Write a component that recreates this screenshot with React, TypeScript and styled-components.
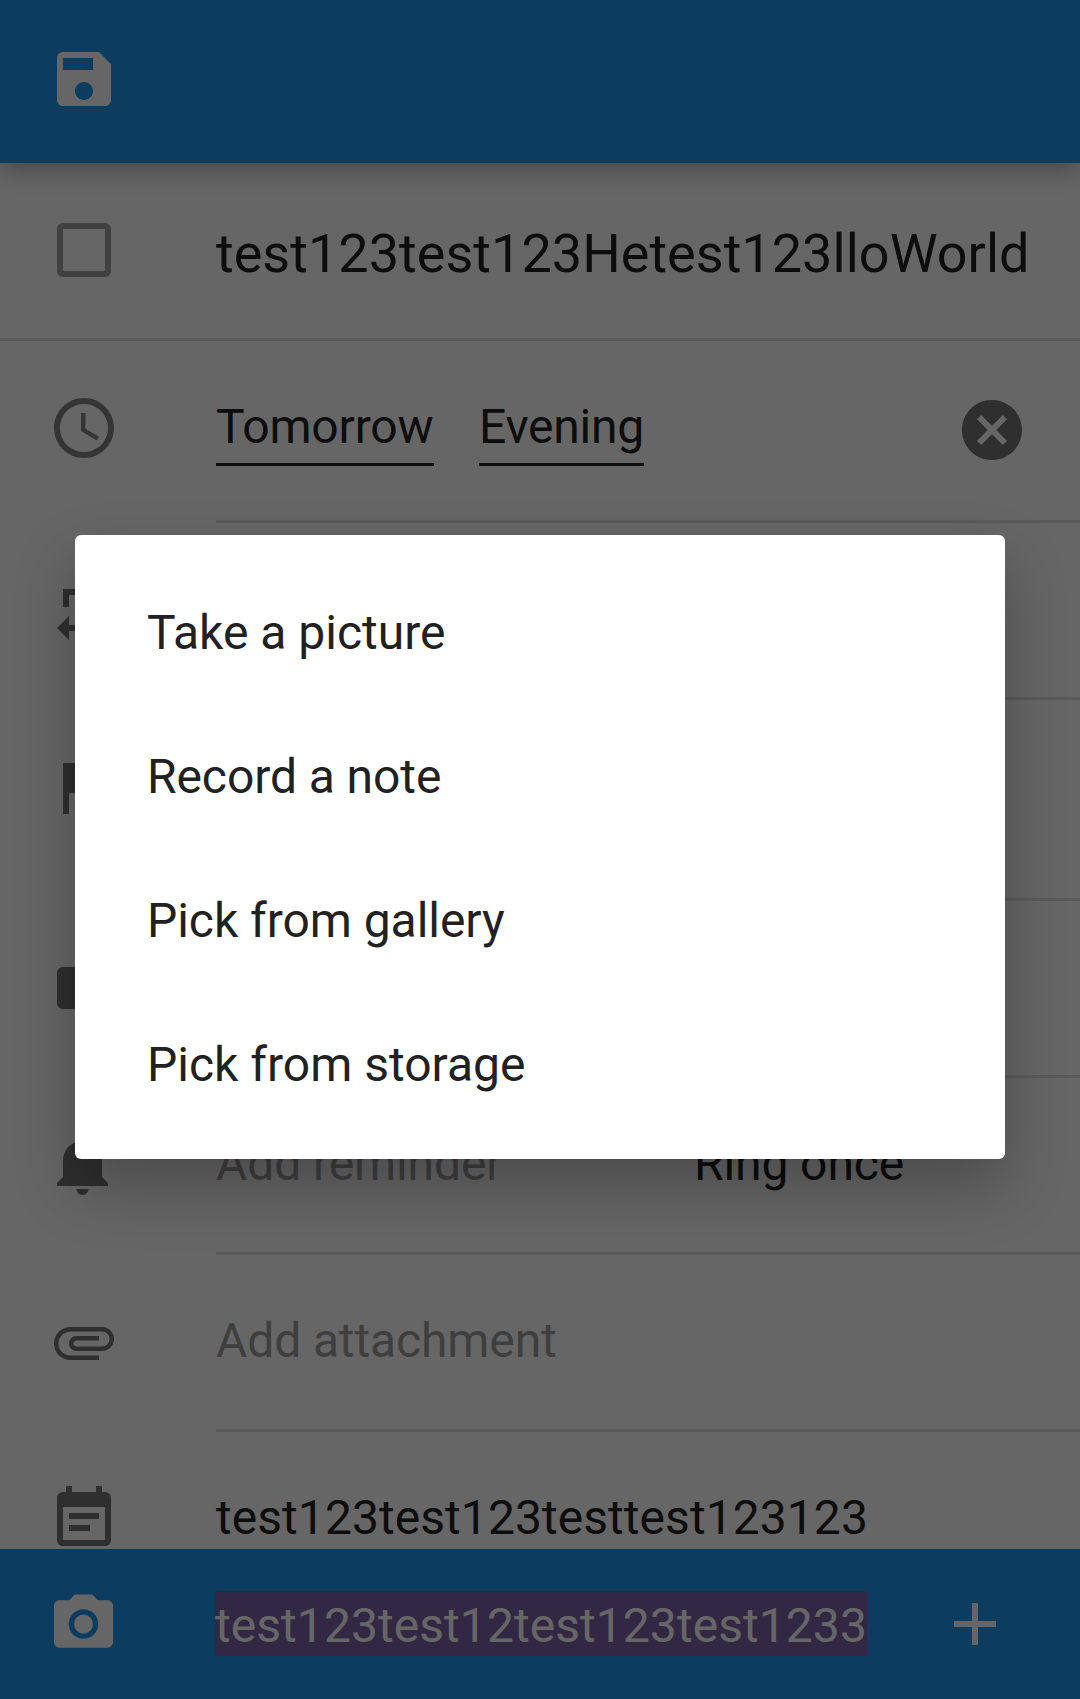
import React from "react";
import styled, { createGlobalStyle } from "styled-components";

const GlobalStyle = createGlobalStyle`
  body { margin: 0; }
  * { box-sizing: border-box; }
`;

const Screen = styled.div`
  position: relative;
  display: flex;
  flex-direction: column;
  width: 1080px;
  height: 1699px;
  overflow: hidden;
  background: #fff;
  color: #212121;
  font-family: Roboto, "Noto Sans", sans-serif;
  font-size: 48px;
  white-space: nowrap;
`;

const Toolbar = styled.header`
  position: relative;
  z-index: 1;
  flex: none;
  height: 163px;
  padding: 43px 48px 0;
  background: #2196f3;
  box-shadow: 0 9px 22px rgba(0, 0, 0, 0.27);
`;

const Icon = styled.svg<{ $color?: string }>`
  display: block;
  flex: none;
  width: 72px;
  height: 72px;
  fill: ${(p) => p.$color ?? "#757575"};
`;

const Fields = styled.main`
  flex: 1;
  min-height: 0;
  overflow: hidden;
`;

const Row = styled.section<{ $height: number; $full?: boolean }>`
  display: grid;
  grid-template-columns: 168px 1fr;
  height: ${(p) => p.$height}px;
  padding-left: 48px;
  ${(p) => p.$full && "box-shadow: inset 0 -3px #e0e0e0;"}
  > svg {
    margin-top: 51px;
  }
`;

const Content = styled.div<{ $line?: boolean }>`
  display: flex;
  align-items: flex-start;
  padding-top: 50px;
  border-bottom: ${(p) => (p.$line ? "3px solid #e0e0e0" : "none")};
`;

const Title = styled.div`
  padding-top: 5px;
  font-size: 54px;
  line-height: 72px;
  letter-spacing: 0.03px;
`;

const Value = styled.div<{ $hint?: boolean; $width?: number; $tracking?: number }>`
  width: ${(p) => (p.$width ? `${p.$width}px` : "auto")};
  line-height: 72px;
  letter-spacing: ${(p) => p.$tracking ?? 0}px;
  color: ${(p) => (p.$hint ? "#9e9e9e" : "inherit")};
`;

const Picker = styled.div<{ $width: number; $tracking: number }>`
  width: ${(p) => p.$width}px;
  height: 75px;
  margin-right: 45px;
  line-height: 72px;
  letter-spacing: ${(p) => p.$tracking}px;
  border-bottom: 3px solid #212121;
`;

const ClearButton = styled.div`
  margin: 3px 52px 0 auto;
`;

const QuickBar = styled.footer`
  display: flex;
  align-items: center;
  flex: none;
  height: 150px;
  padding: 0 69px 0 48px;
  background: #2196f3;
`;

const QuickInput = styled.div`
  flex: 1;
  padding-left: 95px;
`;

const Selection = styled.span`
  display: block;
  width: 652px;
  height: 65px;
  margin-bottom: 1px;
  line-height: 70px;
  letter-spacing: 0.06px;
  color: #fff;
  background: #7f64ab;
`;

const Scrim = styled.div`
  position: absolute;
  inset: 0;
  z-index: 2;
  display: flex;
  align-items: center;
  justify-content: center;
  padding-bottom: 5px;
  background: rgba(0, 0, 0, 0.6);
`;

const Dialog = styled.div`
  width: 930px;
  padding: 24px 0;
  border-radius: 6px;
  background: #fff;
  box-shadow: 0 28px 60px rgba(0, 0, 0, 0.26);
`;

const Option = styled.div<{ $tracking: number }>`
  height: 144px;
  padding: 2px 72px 0;
  line-height: 144px;
  letter-spacing: ${(p) => p.$tracking}px;
`;

const paths = {
  save: "M17 3H5c-1.11 0-2 .9-2 2v14c0 1.1.89 2 2 2h14c1.1 0 2-.9 2-2V7l-4-4zm-5 16c-1.66 0-3-1.34-3-3s1.34-3 3-3 3 1.34 3 3-1.34 3-3 3zm3-10H5V5h10v4z",
  box: "M19 5v14H5V5h14m0-2H5c-1.1 0-2 .9-2 2v14c0 1.1.9 2 2 2h14c1.1 0 2-.9 2-2V5c0-1.1-.9-2-2-2z",
  clock: "M11.99 2C6.47 2 2 6.48 2 12s4.47 10 9.99 10C17.52 22 22 17.52 22 12S17.52 2 11.99 2zM12 20c-4.42 0-8-3.58-8-8s3.58-8 8-8 8 3.58 8 8-3.58 8-8 8zM12.5 7H11v6l5.25 3.15.75-1.23-4.5-2.67z",
  repeat: "M7 7h10v3l4-4-4-4v3H5v6h2V7zm10 10H7v-3l-4 4 4 4v-3h12v-6h-2v4z",
  flag: "M14.4 6L14 4H5v17h2v-7h5.6l.4 2h7V6z",
  label: "M17.63 5.84C17.27 5.33 16.67 5 16 5H5C3.9 5 3 5.9 3 7v10c0 1.1.9 2 2 2h11c.67 0 1.27-.33 1.63-.84L22 12l-4.37-6.16z",
  bell: "M11.5 22c1.1 0 2-.9 2-2h-4c0 1.1.9 2 2 2zm6.5-6v-5.5c0-3.07-2.13-5.64-5-6.32V3.5c0-.83-.67-1.5-1.5-1.5S10 2.67 10 3.5v.68c-2.87.68-5 3.25-5 6.32V16l-2 2v1h17v-1l-2-2z",
  clip: "M7.5 18C4.46 18 2 15.54 2 12.5S4.46 7 7.5 7H18c2.21 0 4 1.79 4 4s-1.79 4-4 4H9.5C8.12 15 7 13.88 7 12.5S8.12 10 9.5 10H17v1.5H9.5c-.55 0-1 .45-1 1s.45 1 1 1H18c1.38 0 2.5-1.12 2.5-2.5S19.38 8.5 18 8.5H7.5c-2.21 0-4 1.79-4 4s1.79 4 4 4H17V18H7.5z",
  note: "M17 10H7v2h10v-2zm2-7h-1V1h-2v2H8V1H6v2H5c-1.11 0-2 .9-2 2v14c0 1.1.89 2 2 2h14c1.1 0 2-.9 2-2V5c0-1.1-.9-2-2-2zm0 16H5V8h14v11zm-5-5H7v2h7v-2z",
  cancel: "M12 2C6.47 2 2 6.47 2 12s4.47 10 10 10 10-4.47 10-10S17.53 2 12 2zm5 13.59L15.59 17 12 13.41 8.41 17 7 15.59 10.59 12 7 8.41 8.41 7 12 10.59 15.59 7 17 8.41 13.41 12 17 15.59z",
  camera: "M9 2L7.17 4H4c-1.1 0-2 .9-2 2v12c0 1.1.9 2 2 2h16c1.1 0 2-.9 2-2V6c0-1.1-.9-2-2-2h-3.17L15 2H9zm3 15c-2.76 0-5-2.24-5-5s2.24-5 5-5 5 2.24 5 5-2.24 5-5 5zM12 8.8a3.2 3.2 0 1 0 0 6.4 3.2 3.2 0 0 0 0-6.4z",
  add: "M19 13h-6v6h-2v-6H5v-2h6V5h2v6h6v2z",
};

function Glyph({ name, color, viewBox = "0 0 24 24" }: { name: keyof typeof paths; color?: string; viewBox?: string }) {
  return (
    <Icon viewBox={viewBox} $color={color}>
      <path d={paths[name]} />
    </Icon>
  );
}

const options = [
  { label: "Take a picture", tracking: 0 },
  { label: "Record a note", tracking: -0.08 },
  { label: "Pick from gallery", tracking: -0.05 },
  { label: "Pick from storage", tracking: 0 },
];

export default function App() {
  return (
    <Screen>
      <GlobalStyle />
      <Toolbar>
        <Glyph name="save" color="#fff" />
      </Toolbar>
      <Fields>
        <Row $height={178} $full>
          <Glyph name="box" color="#a3a3a3" />
          <Content>
            <Title>test123test123Hetest123lloWorld</Title>
          </Content>
        </Row>
        <Row $height={182}>
          <Glyph name="clock" color="#868686" />
          <Content $line>
            <Picker $width={218} $tracking={-0.15}>Tomorrow</Picker>
            <Picker $width={165} $tracking={-0.25}>Evening</Picker>
            <ClearButton>
              <Glyph name="cancel" />
            </ClearButton>
          </Content>
        </Row>
        <Row $height={177}>
          <Glyph name="repeat" />
          <Content $line />
        </Row>
        <Row $height={201}>
          <Glyph name="flag" />
          <Content $line />
        </Row>
        <Row $height={177}>
          <Glyph name="label" />
          <Content $line />
        </Row>
        <Row $height={177}>
          <Glyph name="bell" />
          <Content $line>
            <Value $hint $width={478} $tracking={-0.1}>Add reminder</Value>
            <Value $tracking={-0.1}>Ring once</Value>
          </Content>
        </Row>
        <Row $height={177}>
          <Glyph name="clip" />
          <Content $line>
            <Value $hint $tracking={-0.12}>Add attachment</Value>
          </Content>
        </Row>
        <Row $height={177}>
          <Glyph name="note" />
          <Content>
            <Value $tracking={0.06}>test123test123testtest123123</Value>
          </Content>
        </Row>
      </Fields>
      <QuickBar>
        <Glyph name="camera" color="#fff" viewBox="0 -0.17 24.33 24.33" />
        <QuickInput>
          <Selection>test123test12test123test1233</Selection>
        </QuickInput>
        <Glyph name="add" color="#fff" />
      </QuickBar>
      <Scrim>
        <Dialog>
          {options.map(({ label, tracking }) => (
            <Option key={label} $tracking={tracking}>
              {label}
            </Option>
          ))}
        </Dialog>
      </Scrim>
    </Screen>
  );
}
